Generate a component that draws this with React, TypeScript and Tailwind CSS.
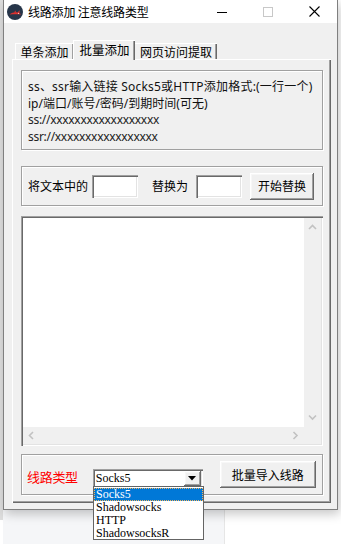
import React from "react";

const raised =
  "bg-[#f0f0f0] shadow-[inset_-1px_-1px_0_#696969,inset_1px_1px_0_#ffffff,inset_-2px_-2px_0_#a0a0a0,inset_2px_2px_0_#f7f7f7]";
const sunken =
  "bg-white shadow-[inset_1px_1px_0_#a0a0a0,inset_2px_2px_0_#696969,inset_-1px_-1px_0_#ffffff,inset_-2px_-2px_0_#e3e3e3]";
const etched = "border border-[#a0a0a0] shadow-[inset_1px_1px_0_#ffffff,1px_1px_0_#ffffff]";

function AppIcon() {
  return (
    <svg width="16" height="16" viewBox="0 0 16 16">
      <circle cx="8" cy="8" r="8" fill="#27364a" />
      <path d="M2.5 10.5 C5 8.5 8 8 10.5 8.6 L12.8 6.2 L12.3 9.2 C13.2 9.6 13.8 10 14 10.6 C10.5 10.1 6.5 10.3 2.5 10.5 Z" fill="#e0322f" />
      <path d="M7 8.6 L8.4 6.6 L9 8.4 Z" fill="#e0322f" />
      <circle cx="11.6" cy="9.4" r="0.5" fill="#ffffff" />
    </svg>
  );
}

function Chevron({ dir }: { dir: "up" | "down" | "left" | "right" }) {
  const d = {
    up: "M1 5 L4.5 1.5 L8 5",
    down: "M1 1.5 L4.5 5 L8 1.5",
    left: "M5 1 L1.5 4.5 L5 8",
    right: "M1.5 1 L5 4.5 L1.5 8",
  }[dir];
  const w = dir === "up" || dir === "down" ? 9 : 7;
  const h = dir === "up" || dir === "down" ? 7 : 9;
  return (
    <svg width={w} height={h} viewBox={`0 0 ${w} ${h}`}>
      <path d={d} fill="none" stroke="#c2c2c2" strokeWidth="1.6" />
    </svg>
  );
}

export default function App() {
  const cjk = "font-['Noto_Sans_CJK_SC','Noto_Sans',sans-serif]";
  return (
    <div className={`relative w-[341px] h-[544px] overflow-hidden bg-white text-black ${cjk}`}>
      {/* desktop behind the dialog */}
      <div className="absolute left-0 top-0 w-[3px] h-[520px] bg-[#dedede]" />
      <div className="absolute left-[3px] top-[510px] w-[222px] h-[34px] bg-[#f5f6f8] border-r border-[#e6e6e6]" />

      {/* dialog window */}
      <div className="absolute left-[3px] top-0 w-[335px] h-[510px] border-x border-b border-[#7f7f7f] bg-[#f0f0f0] shadow-[2px_4px_10px_rgba(0,0,0,0.22)] flex flex-col">
        {/* title bar */}
        <div className="h-[23px] bg-white flex items-center shrink-0">
          <div className="ml-[3px]">
            <AppIcon />
          </div>
          <div className="ml-[5px] text-[12px] leading-none tracking-[-0.2px]">线路添加 注意线路类型</div>
          <div className="ml-auto flex h-full">
            <div className="w-[46px] flex items-center justify-center">
              <svg width="10" height="10" viewBox="0 0 10 10">
                <path d="M0 5.5 H10" stroke="#000" strokeWidth="1" />
              </svg>
            </div>
            <div className="w-[46px] flex items-center justify-center">
              <svg width="10" height="10" viewBox="0 0 10 10">
                <rect x="0.5" y="0.5" width="9" height="9" fill="none" stroke="#c8c8c8" strokeWidth="1" />
              </svg>
            </div>
            <div className="w-[46px] flex items-center justify-center">
              <svg width="11" height="11" viewBox="0 0 11 11">
                <path d="M0.5 0.5 L10.5 10.5 M10.5 0.5 L0.5 10.5" stroke="#000" strokeWidth="1.1" />
              </svg>
            </div>
          </div>
        </div>

        {/* body */}
        <div className="pt-[17px] pl-[8px]">
          {/* tabs */}
          <div className="flex items-end h-[19px] pl-[3px] text-[12px] leading-none">
            <div className="w-[58px] h-[16px] flex items-center justify-center border-t border-l border-white shadow-[inset_-1px_0_0_#a0a0a0]">
              单条添加
            </div>
            <div className="relative z-10 w-[62px] h-[20px] -mb-px bg-[#f0f0f0] flex items-center justify-center border-t border-l border-white shadow-[inset_-1px_0_0_#696969,inset_-2px_0_0_#a0a0a0] text-[12.5px]">
              批量添加
            </div>
            <div className="w-[82px] h-[16px] flex items-center justify-center border-t border-white shadow-[inset_-1px_0_0_#696969,inset_-2px_0_0_#a0a0a0]">
              网页访问提取
            </div>
          </div>

          {/* tab page */}
          <div className="w-[319px] h-[444px] border-t border-l border-white shadow-[inset_-1px_-1px_0_#696969,inset_-2px_-2px_0_#a0a0a0] pt-[10px] pl-[8px]">
            {/* info group */}
            <div className={`w-[302px] h-[80px] ${etched} pt-[8px] pl-[6px] text-[12px] leading-[16.7px] text-[#111] font-['Noto_Sans','Noto_Sans_CJK_SC',sans-serif]`}>
              <div className="tracking-[0.2px]">ss、ssr输入链接 Socks5或HTTP添加格式:(一行一个)</div>
              <div>ip/端口/账号/密码/到期时间(可无)</div>
              <div className="tracking-[-0.3px] text-[#222]">ss://xxxxxxxxxxxxxxxxxx</div>
              <div className="tracking-[-0.3px] text-[#222]">ssr://xxxxxxxxxxxxxxxxx</div>
            </div>

            {/* replace group */}
            <div className={`mt-[16px] w-[302px] h-[40px] ${etched} flex items-center pl-[6px] text-[12px]`}>
              <span>将文本中的</span>
              <div className={`ml-[4px] w-[46px] h-[23px] ${sunken}`} />
              <span className="ml-[14px]">替换为</span>
              <div className={`ml-[8px] w-[46px] h-[23px] ${sunken}`} />
              <button className={`ml-[8px] w-[64px] h-[27px] ${raised} flex items-center justify-center text-[12px]`}>
                开始替换
              </button>
            </div>

            {/* textarea */}
            <div className={`mt-[10px] w-[302px] h-[230px] ${sunken} p-[2px] flex flex-col`}>
              <div className="flex flex-1 min-h-0">
                <div className="flex-1 bg-white" />
                <div className="w-[17px] bg-[#f0f0f0] flex flex-col items-center justify-between py-[6px]">
                  <Chevron dir="up" />
                  <Chevron dir="down" />
                </div>
              </div>
              <div className="h-[17px] flex">
                <div className="flex-1 bg-[#f0f0f0] flex items-center justify-between px-[5px]">
                  <Chevron dir="left" />
                  <Chevron dir="right" />
                </div>
                <div className="w-[17px] bg-[#f0f0f0]" />
              </div>
            </div>

            {/* type group */}
            <div className={`mt-[8px] w-[302px] h-[41px] ${etched} flex items-center pl-[5px]`}>
              <span className="mt-[5px] text-[13px] tracking-[-0.3px] text-[#ff0000]">线路类型</span>
              <div className={`ml-[15px] mt-[7px] w-[110px] h-[19px] ${sunken} flex items-center pl-[3px] pr-[2px]`}>
                <span className="flex-1 text-[12px] leading-none font-['Liberation_Serif',serif]">Socks5</span>
                <div className={`w-[17px] h-[15px] ${raised} flex items-center justify-center`}>
                  <svg width="8" height="5" viewBox="0 0 8 5">
                    <path d="M0 0 H8 L4 4.5 Z" fill="#000" />
                  </svg>
                </div>
              </div>
              <button className={`ml-[17px] w-[96px] h-[27px] ${raised} flex items-center justify-center text-[12px]`}>
                批量导入线路
              </button>
            </div>
          </div>
        </div>
      </div>

      {/* open dropdown list */}
      <div className="absolute left-[93px] top-[486px] w-[111px] h-[54px] bg-white border border-[#646464] font-['Liberation_Serif',serif] text-[12px] leading-[13px] pt-px">
        <div className="h-[13px] bg-[#0078d7] text-white pl-[2px] outline outline-1 outline-dotted outline-[#f2b25c] -outline-offset-1">
          Socks5
        </div>
        <div className="h-[13px] pl-[2px]">Shadowsocks</div>
        <div className="h-[13px] pl-[2px]">HTTP</div>
        <div className="h-[13px] pl-[2px]">ShadowsocksR</div>
      </div>
    </div>
  );
}
